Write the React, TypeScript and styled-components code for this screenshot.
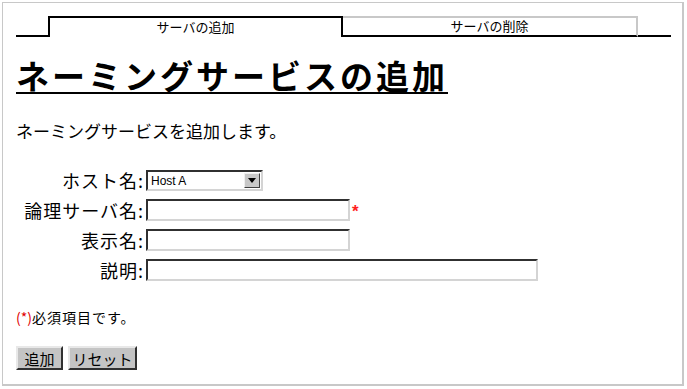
import React from "react";
import styled, { createGlobalStyle } from "styled-components";

const Global = createGlobalStyle`
  html, body { margin: 0; padding: 0; background: #fff; }
  body { font-family: "Noto Sans CJK JP", "Noto Sans", sans-serif; color: #000; }
`;

const Frame = styled.div`
  box-sizing: border-box;
  margin: 2px 0 0 2px;
  width: 682px;
  height: 384px;
  border: 1px solid #c8c8c8;
  border-right-width: 2px;
  border-bottom-width: 2px;
  padding: 13px 11px 0 13px;
`;

const TabBar = styled.div`
  display: flex;
  align-items: flex-end;
  height: 21px;
`;

const TabSpacer = styled.div<{ $w: number }>`
  box-sizing: border-box;
  width: ${(p) => p.$w}px;
  height: 2px;
  background: #000;
`;

const Tab = styled.div<{ $active?: boolean }>`
  box-sizing: border-box;
  width: 295px;
  height: 21px;
  display: flex;
  align-items: center;
  justify-content: center;
  font-size: 13px;
  line-height: 1;
  padding-bottom: 2px;
  ${(p) =>
    p.$active
      ? `border-top: 2px solid #000; border-left: 2px solid #000; border-right: 2px solid #000;`
      : `border-top: 2px solid #c8c8c8; border-right: 2px solid #c8c8c8; border-bottom: 2px solid #000;`}
`;

const Title = styled.h1`
  margin: 19px 0 0 0;
  font-size: 33px;
  line-height: 38px;
  font-weight: bold;
  text-decoration: underline;
  text-decoration-thickness: 2px;
  text-underline-offset: 3px;
  letter-spacing: 3px;
  width: max-content;
`;

const Lead = styled.p`
  margin: 26px 0 0 0;
  font-size: 17px;
  line-height: 22px;
`;

const FormGrid = styled.div`
  display: grid;
  grid-template-columns: 127px auto;
  column-gap: 3px;
  row-gap: 8px;
  margin-top: 28px;
  align-items: center;
  justify-items: start;
`;

const Label = styled.label`
  justify-self: end;
  font-size: 18px;
  line-height: 21px;
  letter-spacing: 1px;
  white-space: nowrap;
  margin-right: -1px;
`;

const SelectBox = styled.div`
  box-sizing: border-box;
  width: 117px;
  height: 21px;
  display: flex;
  align-items: center;
  border-top: 2px solid #303030;
  border-left: 2px solid #303030;
  border-right: 2px solid #d4d4d4;
  border-bottom: 2px solid #d4d4d4;
  background: #fff;
`;

const NativeSelect = styled.select`
  appearance: none;
  -webkit-appearance: none;
  flex: 1;
  min-width: 0;
  border: none;
  outline: none;
  background: transparent;
  font-family: "Liberation Sans", Arial, sans-serif;
  font-size: 12px;
  padding: 0 0 0 3px;
  height: 17px;
  color: #000;
`;

const ArrowButton = styled.span`
  box-sizing: border-box;
  width: 16px;
  height: 15px;
  margin-right: 1px;
  background: #c8c8c8;
  border-top: 1px solid #f0f0f0;
  border-left: 1px solid #f0f0f0;
  border-right: 1px solid #404040;
  border-bottom: 1px solid #404040;
  display: flex;
  align-items: center;
  justify-content: center;
`;

const TextInput = styled.input<{ $w: number }>`
  box-sizing: border-box;
  width: ${(p) => p.$w}px;
  height: 22px;
  border-top: 2px solid #303030;
  border-left: 2px solid #303030;
  border-right: 2px solid #d4d4d4;
  border-bottom: 2px solid #d4d4d4;
  padding: 0 2px;
  font-size: 13px;
  outline: none;
`;

const FieldWrap = styled.div`
  display: flex;
  align-items: center;
  gap: 2px;
`;

const Required = styled.span`
  color: #ff2020;
  font-family: "Liberation Sans", Arial, sans-serif;
  font-weight: bold;
  font-size: 17px;
  line-height: 1;
  margin-top: 3px;
`;

const Note = styled.p`
  margin: 27px 0 0 0;
  font-size: 14px;
  line-height: 18px;
  letter-spacing: 1px;
`;

const NoteMark = styled.span`
  color: #e00000;
  letter-spacing: 0;
`;

const ButtonRow = styled.div`
  display: flex;
  gap: 5px;
  margin-top: 20px;
`;

const Button = styled.button<{ $w: number }>`
  box-sizing: border-box;
  width: ${(p) => p.$w}px;
  height: 24px;
  padding: 0;
  background: #c4c4c4;
  border-top: 2px solid #e8e8e8;
  border-left: 2px solid #e8e8e8;
  border-right: 2px solid #303030;
  border-bottom: 2px solid #303030;
  font-family: "Noto Sans CJK JP", sans-serif;
  font-size: 15px;
  line-height: 1;
  color: #000;
  white-space: nowrap;
`;

export default function App() {
  return (
    <>
      <Global />
      <Frame>
        <TabBar>
          <TabSpacer $w={32} />
          <Tab $active>サーバの追加</Tab>
          <Tab>サーバの削除</Tab>
          <TabSpacer $w={33} />
        </TabBar>
        <Title>ネーミングサービスの追加</Title>
        <Lead>ネーミングサービスを追加します。</Lead>
        <FormGrid>
          <Label>ホスト名:</Label>
          <SelectBox>
            <NativeSelect defaultValue="HostA">
              <option value="HostA">Host A</option>
            </NativeSelect>
            <ArrowButton>
              <svg width="8" height="5" viewBox="0 0 8 5">
                <polygon points="0,0 8,0 4,5" fill="#000" />
              </svg>
            </ArrowButton>
          </SelectBox>
          <Label>論理サーバ名:</Label>
          <FieldWrap>
            <TextInput $w={204} />
            <Required>*</Required>
          </FieldWrap>
          <Label>表示名:</Label>
          <TextInput $w={204} />
          <Label>説明:</Label>
          <TextInput $w={392} />
        </FormGrid>
        <Note>
          <NoteMark>(*)</NoteMark>必須項目です。
        </Note>
        <ButtonRow>
          <Button $w={47}>追加</Button>
          <Button $w={69}>リセット</Button>
        </ButtonRow>
      </Frame>
    </>
  );
}
